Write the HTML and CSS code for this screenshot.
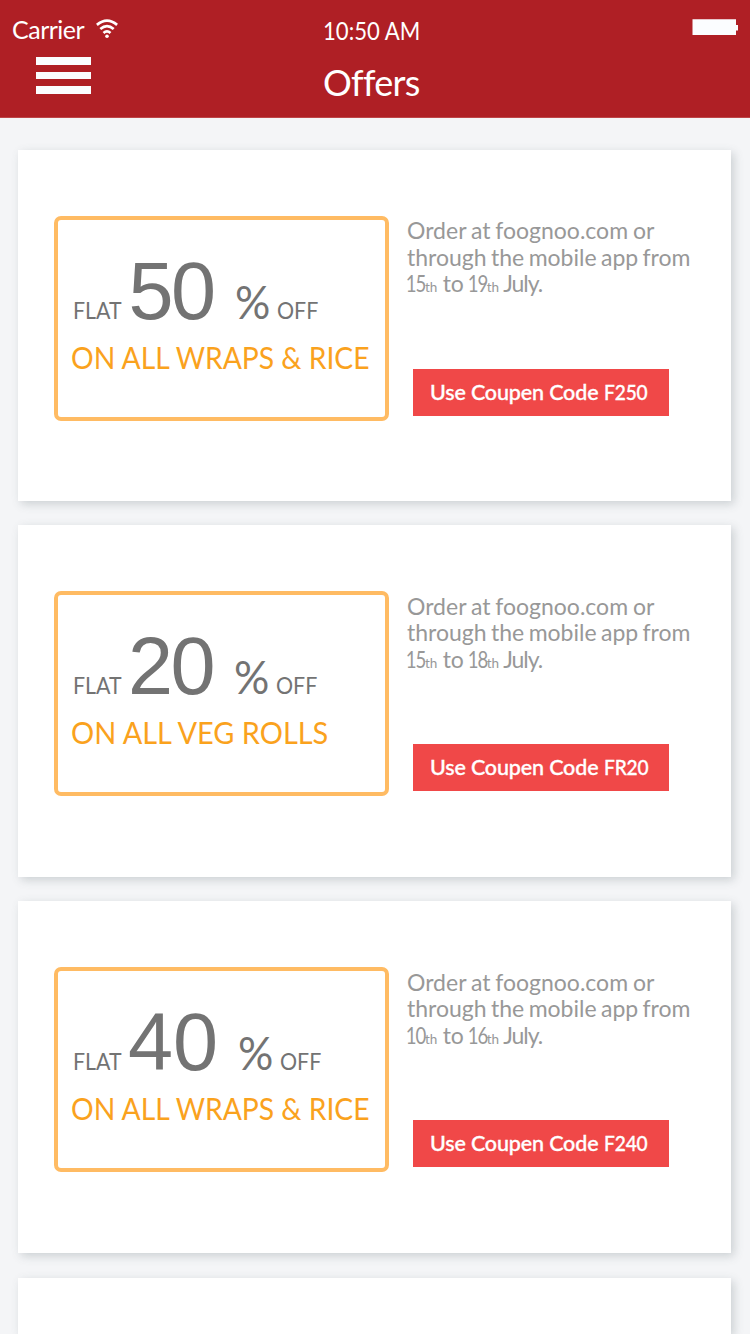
FILE: index.html
```html
<!DOCTYPE html>
<html lang="en">
<head>
<meta charset="utf-8">
<title>Offers</title>
<link rel="stylesheet" href="styles.css">
</head>
<body>
<header class="header">
  <div class="status">
    <div class="status-left">
      <span class="carrier">Carrier</span>
      <svg class="wifi" width="22" height="20" viewBox="0 0 22 20" fill="none" stroke="#fff" stroke-width="2.7">
        <path d="M.9 5.9Q11-2.5 21.1 5.9"/>
        <path d="M4.3 10Q11 4.2 17.7 10"/>
        <path d="M7.5 13.9Q11 10.7 14.5 13.9"/>
        <circle cx="11" cy="17.3" r="1.8" fill="#fff" stroke="none"/>
      </svg>
    </div>
    <span class="time">10:50 AM</span>
    <svg class="battery" width="46" height="16" viewBox="0 0 46 16" fill="#fbfdff">
      <path d="M.5 .3H44V6H46V11.500H44V16H.5Z"/>
    </svg>
  </div>
  <div class="nav">
    <div class="menu"><i class="bar"></i><i class="bar"></i><i class="bar"></i></div>
    <h1 class="title">Offers</h1>
  </div>
</header>
<main class="offers">
  <article class="card">
    <div class="deal">
      <div class="rate"><span class="flat">FLAT</span><span class="num">50</span><span class="pct">%</span><span class="off">OFF</span></div>
      <div class="on wraps">ON ALL WRAPS &amp; RICE</div>
    </div>
    <div class="info">
      <p class="desc"><span class="l1">Order at foognoo.com or</span><span class="l2">through the mobile app from</span><span class="l3"><b>15</b><small>th</small> to <b>19</b><small>th</small> <em>July.</em></span></p>
      <div class="code">Use Coupen Code <span class="coupon">F250</span></div>
    </div>
  </article>
  <article class="card tall">
    <div class="deal">
      <div class="rate narrow"><span class="flat">FLAT</span><span class="num">20</span><span class="pct">%</span><span class="off">OFF</span></div>
      <div class="on veg">ON ALL VEG ROLLS</div>
    </div>
    <div class="info">
      <p class="desc"><span class="l1">Order at foognoo.com or</span><span class="l2">through the mobile app from</span><span class="l3"><b>15</b><small>th</small> to <b>18</b><small>th</small> <em>July.</em></span></p>
      <div class="code">Use Coupen Code <span class="coupon">FR20</span></div>
    </div>
  </article>
  <article class="card tall">
    <div class="deal">
      <div class="rate wide"><span class="flat">FLAT</span><span class="num">40</span><span class="pct">%</span><span class="off">OFF</span></div>
      <div class="on wraps">ON ALL WRAPS &amp; RICE</div>
    </div>
    <div class="info">
      <p class="desc"><span class="l1">Order at foognoo.com or</span><span class="l2">through the mobile app from</span><span class="l3"><b>10</b><small>th</small> to <b>16</b><small>th</small> <em>July.</em></span></p>
      <div class="code">Use Coupen Code <span class="coupon">F240</span></div>
    </div>
  </article>
  <article class="card last"></article>
</main>
</body>
</html>
```
FILE: styles.css
```css
* { box-sizing: border-box; }
html { overflow: hidden; }
body {
  margin: 0;
  width: 750px;
  height: 1334px;
  overflow: hidden;
  background: #f4f5f7;
  font-family: Lato, "Open Sans", sans-serif;
}
.header {
  height: 118px;
  background: #af1f25;
  border-bottom: 1px solid #bd4548;
  color: #fff;
}
.status {
  display: grid;
  grid-template-columns: 323px 1fr 58px;
  height: 56px;
  padding-top: 14px;
}
.status-left { display: flex; padding-left: 12px; }
.carrier {
  width: 84px;
  font-size: 25px;
  line-height: 30px;
  letter-spacing: -0.5px;
  white-space: nowrap;
}
.wifi { margin-top: 5px; }
.time { font-size: 25px; line-height: 32px; transform: scaleX(.885); transform-origin: 0 0; }
.battery { margin-top: 5px; }
.nav { display: grid; grid-template-columns: 323px 1fr; }
.menu { display: flex; flex-direction: column; gap: 7px; padding: 1px 0 0 36px; }
.bar { width: 55px; height: 7.500px; background: #fbfdff; }
.title { margin: 4px 0 0; font-size: 36px; font-weight: 400; line-height: 44px; letter-spacing: -0.700px; }

.offers {
  display: flex;
  flex-direction: column;
  gap: 24px;
  height: 1216px;
  padding: 32px 19px 0 18px;
}
.card {
  flex: none;
  display: flex;
  height: 351px;
  padding: 66px 0 0 36px;
  background: #fff;
  box-shadow: 3px 3px 9px rgba(70, 85, 90, .23);
}
.tall { height: 352px; }
.last { height: 56px; margin-top: 1px; padding: 0; }
.deal {
  width: 335px;
  height: 205px;
  border: 4px solid #ffbb63;
  border-radius: 7px;
  white-space: nowrap;
}
.rate {
  display: grid;
  grid-template-columns: 55.500px 106.500px 42px 1fr;
  align-items: baseline;
  height: 118px;
  padding: 24px 0 0 15px;
  color: #737373;
  line-height: 94px;
}
.rate.narrow { grid-template-columns: 55px 106px 42px 1fr; }
.rate.wide { grid-template-columns: 55px 110px 42px 1fr; }
.flat, .off { font-size: 24px; transform: scaleX(.89); transform-origin: 0 0; }
.num { font-family: "Liberation Sans", sans-serif; font-size: 81px; letter-spacing: -2.500px; }
.wide .num { letter-spacing: 0; }
.pct { font-size: 45.500px; transform: scaleX(.97); transform-origin: 0 0; }
.on {
  margin: 0 0 0 13px;
  font-size: 31px;
  line-height: 38px;
  color: #faa21d;
  transform-origin: 0 0;
}
.wraps { transform: scaleX(.912); }
.veg { transform: scaleX(.933); }
.info { padding-left: 18px; }
.desc {
  margin: 1px 0 0;
  height: 152px;
  font-size: 23px;
  line-height: 26.500px;
  color: #989898;
  white-space: nowrap;
}
.desc > span { display: block; }
.l1 { word-spacing: -1px; }
.l2 { word-spacing: -1.500px; }
.l3 { letter-spacing: -0.400px; }
.desc b {
  display: inline-block;
  width: 18px;
  font-weight: 400;
  letter-spacing: -1.500px;
  text-indent: -1.500px;
  transform: scaleX(.81);
  transform-origin: 0 0;
}
.desc em { font-style: normal; letter-spacing: -1px; margin-left: -1.500px; }
.desc small { font-size: 13.500px; line-height: 1; letter-spacing: 0; }
.tall .desc { margin-top: 1.500px; height: 151.500px; }
.code {
  width: 256px;
  height: 47px;
  margin-left: 6px;
  padding-left: 17px;
  background: #f04848;
  color: #fff;
  font-size: 21.500px;
  font-weight: 500;
  -webkit-text-stroke: .35px #fff;
  letter-spacing: -0.150px;
  line-height: 46px;
  white-space: nowrap;
}
.coupon { display: inline-block; transform: scaleX(.89); transform-origin: 0 0; }
```
